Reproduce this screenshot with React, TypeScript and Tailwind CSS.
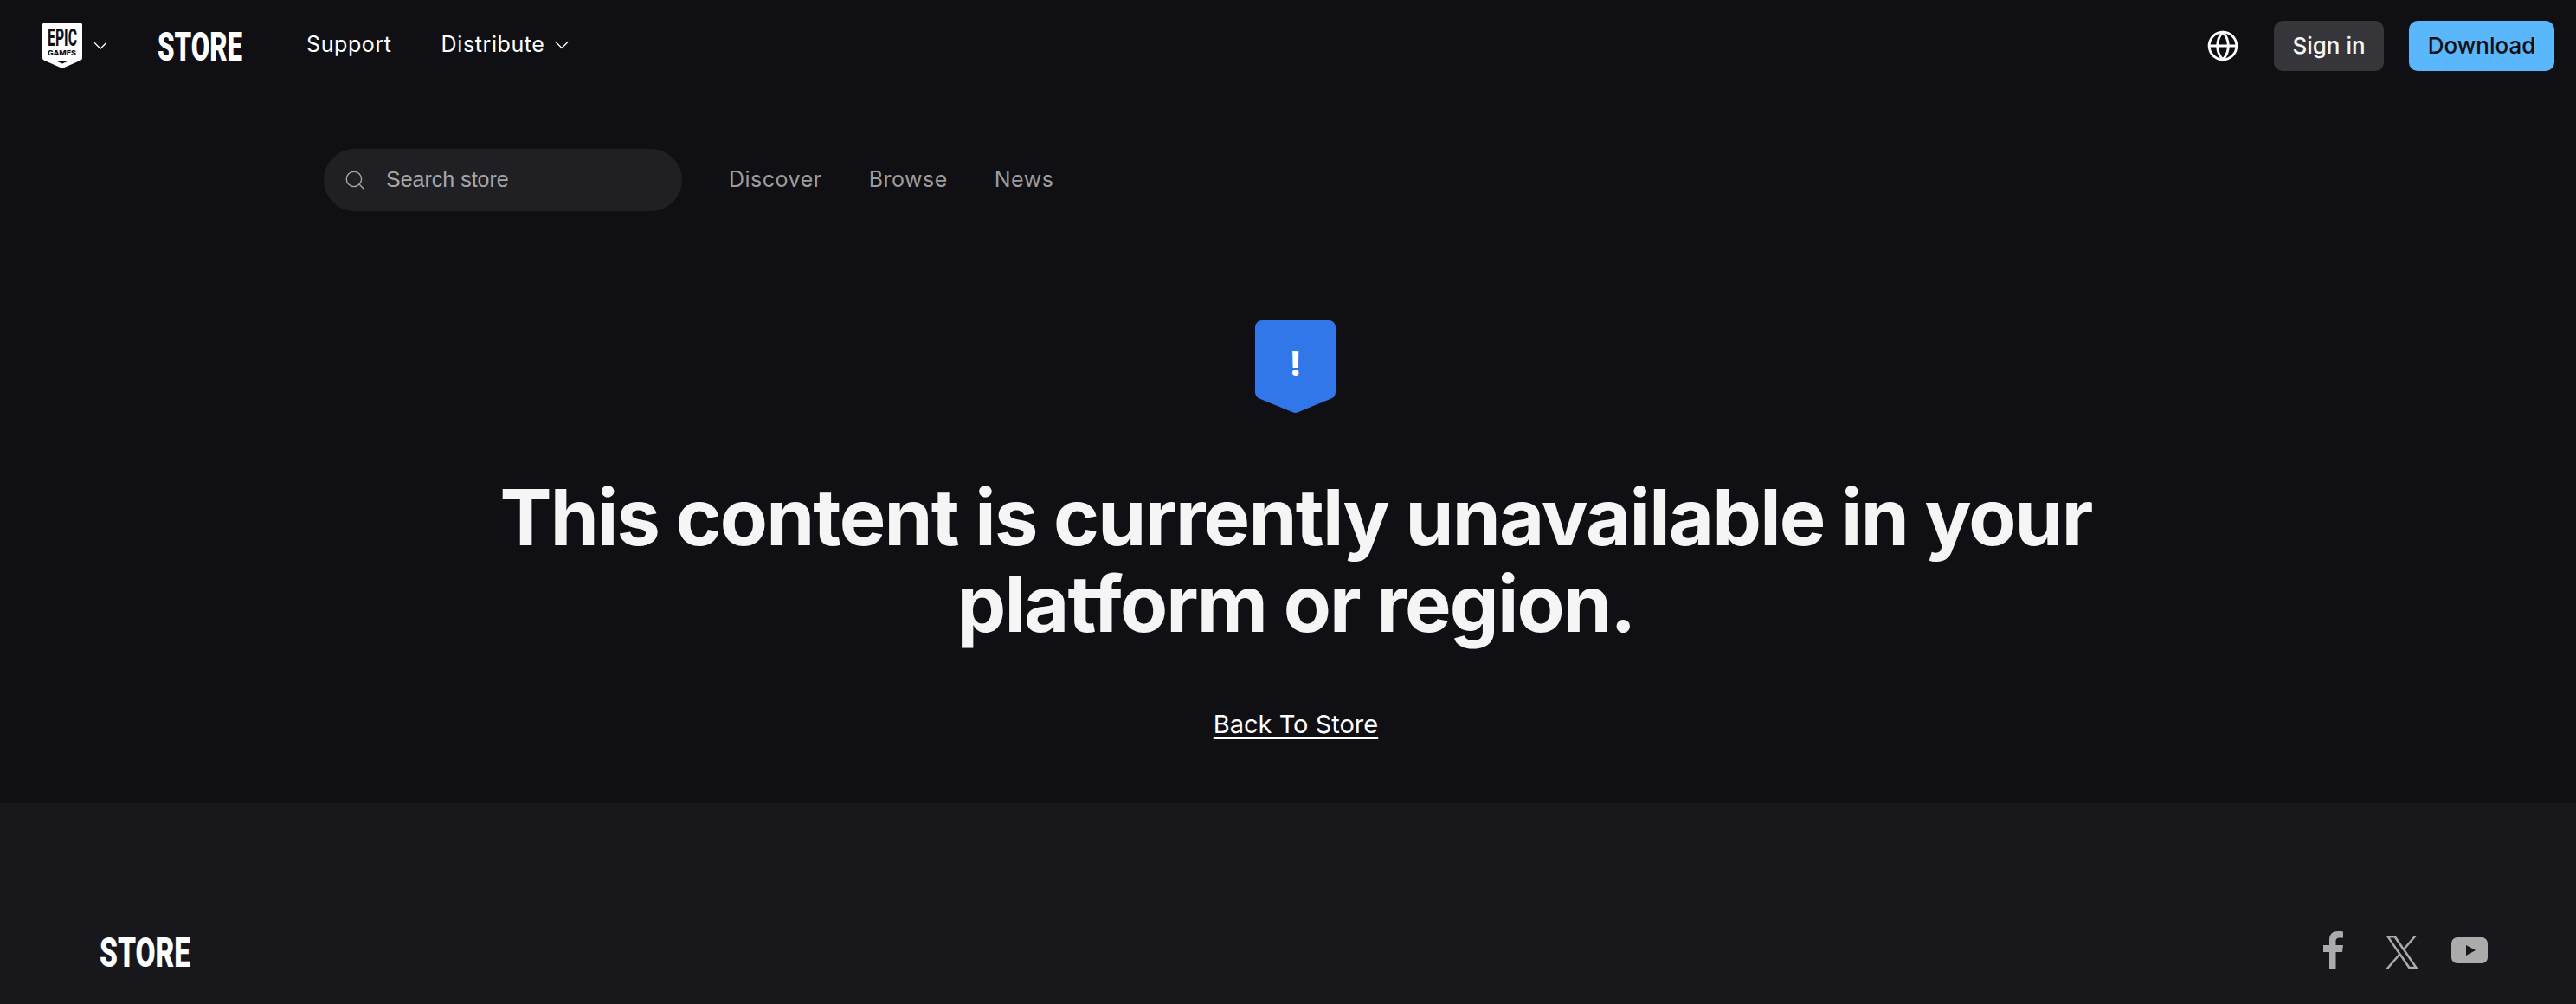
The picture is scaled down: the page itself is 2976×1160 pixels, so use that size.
import React from "react";
import { ChevronDown, Search, Globe } from "lucide-react";

const font = "font-['Inter','Liberation_Sans',sans-serif]";

const StoreMark = ({ width, height }: { width: number; height: number }) => (
  <svg width={width} height={height} viewBox={`0 0 ${width} ${height}`} fill="#fff" className="overflow-visible">
    <text
      x="0"
      y={height}
      textLength={width}
      lengthAdjust="spacingAndGlyphs"
      fontFamily="Roboto, sans-serif"
      fontWeight="900"
      fontSize={height * 1.38}
    >
      STORE
    </text>
  </svg>
);

const EpicLogo = () => (
  <svg width="48" height="54" viewBox="0 0 48 54" className="overflow-visible">
    <path
      d="M4 0h40a3 3 0 0 1 3 3v38a3 3 0 0 1-2 2.800L24 53 3 43.800A3 3 0 0 1 1 41V3a3 3 0 0 1 3-3z"
      fill="#fff"
    />
    <text
      x="7"
      y="27"
      textLength="34"
      lengthAdjust="spacingAndGlyphs"
      fontFamily="Roboto, sans-serif"
      fontWeight="700"
      fontSize="28"
      fill="#101014"
    >
      EPIC
    </text>
    <text
      x="7"
      y="38"
      textLength="33"
      lengthAdjust="spacingAndGlyphs"
      fontFamily="Inter, sans-serif"
      fontWeight="800"
      fontSize="8"
      fill="#101014"
    >
      GAMES
    </text>
    <path d="M16 44h16l-8 3.500z" fill="#101014" />
  </svg>
);

const App: React.FC = () => {
  return (
    <div className={`flex h-[1160px] w-full flex-col overflow-hidden bg-[#101014] text-white ${font}`}>
      <header className="flex h-[106px] shrink-0 items-center pl-[48px] pr-[25px]">
        <EpicLogo />
        <ChevronDown className="ml-[7px]" size={26} strokeWidth={1.200} />
        <div className="ml-[53px]">
          <StoreMark width={98} height={33} />
        </div>
        <nav className="ml-[74px] flex items-center gap-[57px] pb-[2px] text-[25px] tracking-[0.6px]">
          <span>Support</span>
          <span className="flex items-center gap-[5px]">
            Distribute
            <ChevronDown size={28} strokeWidth={1.100} />
          </span>
        </nav>
        <div className="ml-auto flex items-center">
          <Globe size={38} strokeWidth={1.800} />
          <button className="ml-[40px] h-[58px] w-[127px] rounded-[10px] bg-[#35353a] pb-[2px] text-[26px] font-medium text-[#f5f5f5]">
            Sign in
          </button>
          <button className="ml-[29px] h-[58px] w-[168px] rounded-[10px] bg-[#5ab7fb] pb-[2px] text-[26px] font-medium text-[#101014]">
            Download
          </button>
        </div>
      </header>

      <main className="flex flex-1 flex-col">
        <div className="ml-[374px] mt-[66px] flex items-center">
          <div className="flex h-[72px] w-[414px] items-center rounded-full bg-[#202024] pl-[23px]">
            <Search size={26} strokeWidth={1.300} className="text-[#a6a6a8]" />
            <span className="ml-[23px] font-['Liberation_Sans',sans-serif] text-[25px] text-[#a6a6a8]">Search store</span>
          </div>
          <nav className="ml-[54px] flex items-center gap-[54px] pb-[1px] text-[25px] tracking-[0.5px] text-[#9c9c9e]">
            <span>Discover</span>
            <span>Browse</span>
            <span>News</span>
          </nav>
        </div>

        <div className="ml-[18px] mt-[126px] flex flex-col items-center">
          <svg width="93" height="108" viewBox="0 0 93 108" className="mr-[2px]">
            <path
              d="M8 0h77a8 8 0 0 1 8 8v75a8 8 0 0 1-5 7.400L49 106.500a7 7 0 0 1-5 0L5 90.400A8 8 0 0 1 0 83V8a8 8 0 0 1 8-8z"
              fill="#3177e9"
            />
            <text x="46.500" y="64" textAnchor="middle" fontFamily="Inter, sans-serif" fontWeight="800" fontSize="38" fill="#fff">
              !
            </text>
          </svg>
          <h1 className="mt-[70px] w-[1900px] text-center text-[90px] font-bold leading-[100px] tracking-[-1.8px] text-[#f5f5f5]">
            This content is currently unavailable in your
            <br />
            platform or region.
          </h1>
          <a className="mt-[67px] text-[29px] text-white underline underline-offset-[5px]">Back To Store</a>
        </div>
      </main>

      <footer className="flex h-[232px] shrink-0 items-start justify-between bg-[#18181c] pl-[115px] pr-[102px] pt-[154px]">
        <StoreMark width={105} height={35} />
        <div className="-mt-[6px] flex items-center text-[#ababab]">
          <svg width="24" height="44" viewBox="0 0 24 44" fill="currentColor">
            <path d="M7 44V24H0v-8h7v-6C7 3 11 0 17 0c2.500 0 5 .2 6 .4v7h-4c-3.500 0-4.500 1.800-4.500 4.200V16H23l-1 8h-7.500v20z" />
          </svg>
          <svg width="38" height="38" viewBox="0 0 24 24" fill="currentColor" className="ml-[48px] mt-[4px]">
            <path d="M14.234 10.162 22.977 0h-2.072l-7.591 8.824L7.251 0H.258l9.168 13.343L.258 24H2.330l8.016-9.318L16.749 24h6.993zm-2.837 3.299-.929-1.329L3.076 1.560h3.182l5.965 8.532.929 1.329 7.754 11.091h-3.182z" />
          </svg>
          <svg width="42" height="30" viewBox="0 0 42 30" className="ml-[38px]">
            <rect width="42" height="30" rx="7" fill="currentColor" />
            <path d="M17 9v12l11-6z" fill="#18181c" />
          </svg>
        </div>
      </footer>
    </div>
  );
};

export default App;
